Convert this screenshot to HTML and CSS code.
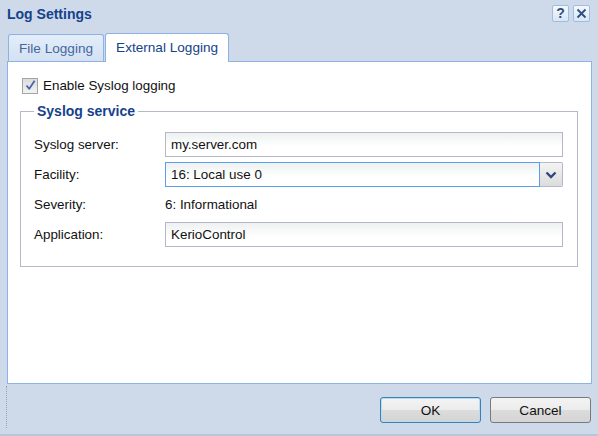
FILE: index.html
```html
<!DOCTYPE html>
<html>
<head>
<meta charset="utf-8">
<link rel="stylesheet" href="styles.css">
</head>
<body>
<div class="window">
  <div class="titlebar">
    <span class="title">Log Settings</span>
    <div class="tools">
      <span class="tool">?</span>
      <span class="tool">
        <svg width="11" height="11" viewBox="0 0 11 11"><path d="M1.5 1.5 L9.5 9.5 M9.5 1.5 L1.5 9.5" stroke="#2d4f80" stroke-width="1.8" fill="none"/></svg>
      </span>
    </div>
  </div>
  <div class="tabs">
    <div class="tab">File Logging</div>
    <div class="tab active">External Logging</div>
  </div>
  <div class="panel">
    <label class="check-row">
      <span class="checkbox">
        <svg width="11" height="11" viewBox="0 0 11 11"><path d="M1.5 5.5 L4.3 8.8 L9.6 0.8" stroke="#4a66a8" stroke-width="1.8" fill="none" stroke-linejoin="round"/></svg>
      </span>
      <span>Enable Syslog logging</span>
    </label>
    <fieldset class="group">
      <legend>Syslog service</legend>
      <div class="row">
        <span class="label">Syslog server:</span>
        <div class="field">my.server.com</div>
      </div>
      <div class="row">
        <span class="label">Facility:</span>
        <div class="combo">
          <div class="field focus">16: Local use 0</div>
          <div class="trigger">
            <svg width="12" height="8" viewBox="0 0 12 8"><path d="M1.5 1.5 L6 6 L10.5 1.5" stroke="#2d4a7c" stroke-width="2.4" fill="none"/></svg>
          </div>
        </div>
      </div>
      <div class="row">
        <span class="label">Severity:</span>
        <span class="value">6: Informational</span>
      </div>
      <div class="row">
        <span class="label">Application:</span>
        <div class="field">KerioControl</div>
      </div>
    </fieldset>
  </div>
  <div class="footer">
    <div class="grip"></div>
    <div class="buttons">
      <button class="btn default">OK</button>
      <button class="btn">Cancel</button>
    </div>
  </div>
</div>
</body>
</html>
```

FILE: styles.css
```css
* { box-sizing: border-box; }
html, body {
  margin: 0;
  padding: 0;
}
body {
  width: 598px;
  height: 436px;
  overflow: hidden;
  font-family: "Liberation Sans", Arial, sans-serif;
  font-size: 13.4px;
  color: #222;
}
.window {
  width: 598px;
  height: 436px;
  background: #cedaea;
  border-bottom: 2px solid #b7c6d9;
  display: flex;
  flex-direction: column;
}
.titlebar {
  height: 33px;
  display: flex;
  align-items: flex-start;
  justify-content: space-between;
  padding: 5px 8px 0 7px;
}
.title {
  font-weight: bold;
  font-size: 14px;
  color: #15428b;
  line-height: 18px;
}
.tools {
  display: flex;
  gap: 4px;
}
.tool {
  width: 17px;
  height: 17px;
  border: 1px solid #9fbde3;
  border-radius: 2px;
  background: linear-gradient(#f4f8fd, #d9e6f5);
  display: flex;
  align-items: center;
  justify-content: center;
  color: #2d4f80;
  font-weight: bold;
  font-size: 14px;
  line-height: 15px;
}
.tabs {
  display: flex;
  align-items: flex-end;
  padding-left: 8px;
  height: 28px;
  gap: 1px;
}
.tab {
  height: 27px;
  padding: 0 10px;
  border: 1px solid #8db2e3;
  border-bottom: none;
  border-radius: 3px 3px 0 0;
  background: linear-gradient(#e4edf9, #d3e1f3);
  color: #45689f;
  font-size: 13.6px;
  line-height: 27px;
}
.tab.active {
  height: 29px;
  background: #fff;
  color: #15428b;
  line-height: 28px;
  margin-bottom: -1px;
  position: relative;
  z-index: 1;
}
.panel {
  margin: 0 6px 0 7px;
  height: 323px;
  background: #fff;
  border: 1px solid #8db2e3;
  padding: 15px 13px 0 12px;
}
.check-row {
  display: flex;
  align-items: center;
  gap: 5px;
  height: 17px;
  color: #111;
}
.checkbox {
  width: 16px;
  height: 16px;
  border: 1px solid #a4a4a4;
  background: linear-gradient(#dcdcdc, #f2f2f2);
  display: flex;
  align-items: center;
  justify-content: center;
  margin-left: 2px;
}
.group {
  margin: 9px 0 0 0;
  border: 1px solid #b5b8c8;
  padding: 13px 14px 19px 13px;
  min-width: 0;
}
.group legend {
  padding: 0 3px;
  margin-left: 0;
  font-weight: bold;
  font-size: 14px;
  color: #15428b;
  line-height: 16px;
}
.row {
  display: flex;
  align-items: center;
  height: 25px;
  margin-bottom: 5px;
}
.row:last-child { margin-bottom: 0; }
.label {
  width: 131px;
  flex: none;
  color: #111;
}
.value {
  color: #111;
}
.field {
  flex: 1;
  height: 25px;
  border: 1px solid #b5b8c8;
  background: linear-gradient(#eef1f1, #fff 60%);
  padding: 0 5px;
  line-height: 23px;
  color: #111;
}
.field.focus {
  border-color: #5b9ee8;
}
.combo {
  flex: 1;
  display: flex;
  height: 25px;
}
.trigger {
  width: 23px;
  height: 25px;
  border: 1px solid #b5b8c8;
  border-left: none;
  border-radius: 0 2px 2px 0;
  background: linear-gradient(#f4f4f4, #dcdcdc);
  display: flex;
  align-items: center;
  justify-content: center;
}
.footer {
  flex: 1;
  display: flex;
  align-items: flex-start;
  justify-content: space-between;
  padding: 13px 7px 0 6px;
}
.grip {
  width: 1px;
  height: 42px;
  margin-top: -11px;
  border-left: 1px dotted #9aa4b0;
}
.buttons {
  display: flex;
  gap: 9px;
}
.btn {
  width: 101px;
  height: 26px;
  border: 1px solid #7a7a7a;
  border-radius: 3px;
  background: linear-gradient(#f3f3f3 0%, #ececec 48%, #dcdcdc 52%, #d4d4d4 100%);
  font-family: "Liberation Sans", Arial, sans-serif;
  font-size: 13.6px;
  color: #111;
  padding: 0;
}
.btn.default {
  border-color: #3c7fb1;
  box-shadow: inset 0 0 0 1px #b9dcf3;
}
```
